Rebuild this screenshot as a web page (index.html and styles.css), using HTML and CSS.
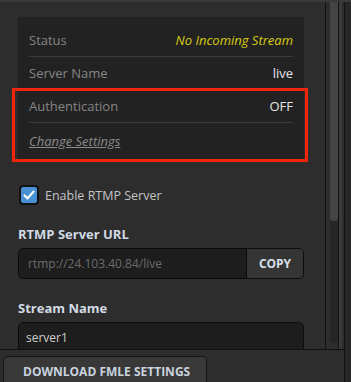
FILE: index.html
```html
<!DOCTYPE html>
<html>
<head>
  <title>RTMP Server</title>
  <link rel="stylesheet" href="styles.css">
</head>
<body>
  <div class="window">
    <div class="left-col">
      <div class="top-area">
        <div class="content">
          <div class="info-panel">
            <div class="info-row">
              <span class="info-label">Status</span>
              <span class="info-value status">No Incoming Stream</span>
            </div>
            <div class="info-row">
              <span class="info-label">Server Name</span>
              <span class="info-value">live</span>
            </div>
            <div class="info-row">
              <span class="info-label">Authentication</span>
              <span class="info-value">OFF</span>
            </div>
            <div class="info-row last">
              <a class="change-link" href="#">Change Settings</a>
            </div>
            <div class="highlight"></div>
          </div>

          <label class="check-row">
            <span class="checkbox">
              <svg width="14" height="14" viewBox="0 0 14 14">
                <path d="M2.5 7.5 L5.6 10.4 L11.5 3.6" fill="none" stroke="#ffffff" stroke-width="2.2" stroke-linecap="round" stroke-linejoin="round"/>
              </svg>
            </span>
            Enable RTMP Server
          </label>

          <div class="field-title">RTMP Server URL</div>
          <div class="field">
            <span class="field-text url">rtmp://24.103.40.84/live</span>
            <button class="copy-btn">COPY</button>
          </div>

          <div class="field-title">Stream Name</div>
          <div class="field">
            <span class="field-text">server1</span>
          </div>
        </div>
        <div class="scroll-track">
          <div class="scroll-thumb"></div>
          <div class="scroll-rest"></div>
        </div>
        <div class="scroll-edge"></div>
      </div>
      <div class="bottom-bar">
        <button class="download-btn">DOWNLOAD FMLE SETTINGS</button>
      </div>
    </div>
    <div class="right-strip"></div>
  </div>
</body>
</html>
```

FILE: styles.css
```css
/* dark settings panel */
body {
  margin: 0;
  background-color: #2d2d2d;
  font-family: "Open Sans", "Liberation Sans", sans-serif;
  overflow: hidden;
}

.window {
  display: flex;
  width: 351px;
  height: 382px;
  border-top: 2px solid #3a3a3a;
  box-sizing: border-box;
}

.left-col {
  width: 344px;
  display: flex;
  flex-direction: column;
  border-right: 1px solid #111111;
}

.top-area {
  display: flex;
  height: 347px;
  border-bottom: 1px solid #111111;
}

.content {
  width: 326px;
  padding: 15px 0 0 18px;
  box-sizing: border-box;
  border-right: 1px solid #111111;
  overflow: hidden;
}

.info-panel {
  position: relative;
  width: 286px;
  background-color: #222222;
  padding: 7px 11px 4px 11px;
  box-sizing: border-box;
}

.info-row {
  display: flex;
  justify-content: space-between;
  align-items: center;
  height: 33px;
  border-bottom: 1px solid #3b3b3b;
  box-sizing: border-box;
  font-size: 13px;
}

.info-row.last {
  border-bottom: none;
  height: 35px;
}

.info-label {
  color: #858585;
}

.info-value {
  color: #e6e6e6;
}

.info-value.status {
  color: #d8cc10;
  font-style: italic;
}

.change-link {
  color: #8a8a8a;
  font-style: italic;
  text-decoration: underline;
}

.highlight {
  position: absolute;
  left: -6px;
  top: 71px;
  width: 296px;
  height: 74px;
  border: 3px solid #f0250c;
  box-sizing: border-box;
}

.check-row {
  display: flex;
  align-items: center;
  gap: 6px;
  margin-top: 23px;
  margin-left: 1px;
  font-size: 12.5px;
  color: #c4c4c4;
}

.checkbox {
  display: flex;
  align-items: center;
  justify-content: center;
  width: 16px;
  height: 16px;
  background-color: #4a90d4;
  border: 2px solid #111111;
  border-radius: 4px;
}

.field-title {
  margin-top: 20px;
  font-size: 13px;
  font-weight: bold;
  color: #d2dae4;
}

.field {
  display: flex;
  align-items: center;
  width: 286px;
  height: 31px;
  margin-top: 5px;
  background-color: #1d1d1d;
  border: 1px solid #0c0c0c;
  border-radius: 5px;
  box-sizing: border-box;
}

.field-text {
  flex-grow: 1;
  padding-left: 7px;
  font-size: 12px;
  color: #d0d0d0;
}

.field-text.url {
  padding-left: 9px;
  color: #6c6c6c;
}

.copy-btn {
  width: 57px;
  height: 29px;
  background-color: #353535;
  border: none;
  border-left: 1px solid #0c0c0c;
  border-radius: 0 4px 4px 0;
  font-family: "Open Sans", "Liberation Sans", sans-serif;
  font-size: 12px;
  font-weight: bold;
  color: #d8e0ea;
}

.scroll-track {
  display: flex;
  flex-direction: column;
  width: 13px;
  padding-left: 4px;
  box-sizing: border-box;
  border-right: 1px solid #111111;
}

.scroll-thumb {
  height: 219px;
  background-color: #444444;
  border-radius: 0 0 5px 5px;
}

.scroll-rest {
  height: 122px;
  background-color: #252525;
  border-radius: 5px;
}

.scroll-edge {
  width: 3px;
  background-color: #3b3b3b;
}

.bottom-bar {
  flex-grow: 1;
  padding: 6px 0 0 3px;
}

.download-btn {
  width: 204px;
  height: 30px;
  background-color: #383838;
  border: 1px solid #151515;
  border-radius: 4px;
  font-family: "Open Sans", "Liberation Sans", sans-serif;
  font-size: 12px;
  font-weight: bold;
  color: #c9d3df;
  text-align: left;
  padding: 0 0 0 19px;
}

.right-strip {
  flex-grow: 1;
  background-color: #262626;
}
```
